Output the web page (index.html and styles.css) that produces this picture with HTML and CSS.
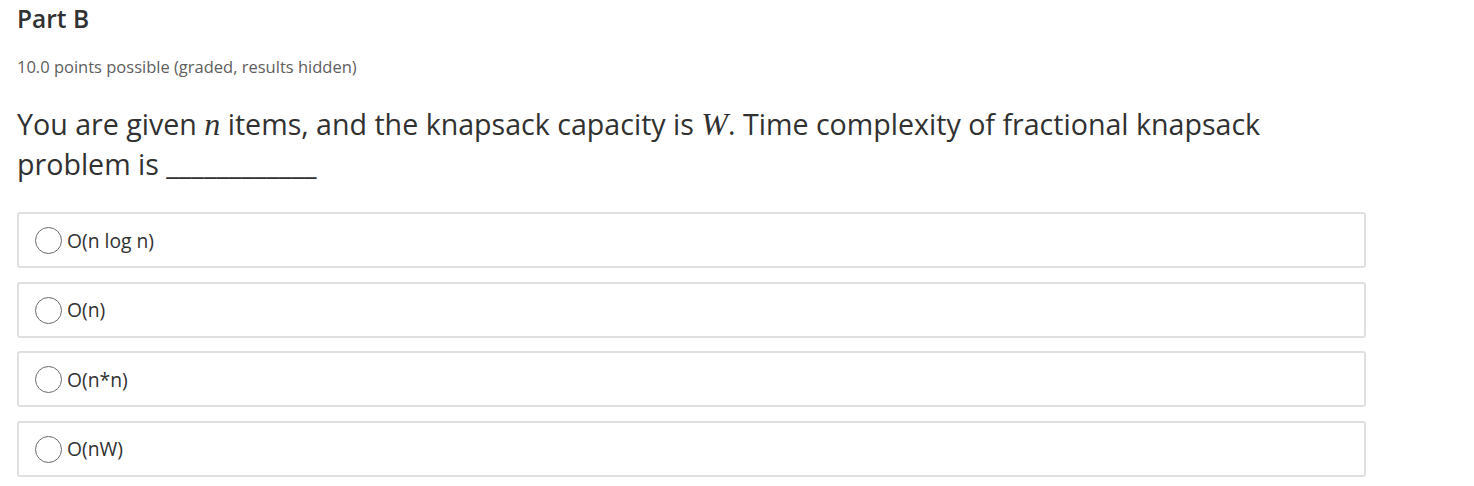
FILE: index.html
```html
<!DOCTYPE html>
<html lang="en">
<head>
  <meta charset="UTF-8" />
  <title>Part B</title>
  <link rel="stylesheet" href="styles.css">
</head>
<body>
  <div class="problem">
    <h3 class="problem-title">Part B</h3>
    <div class="problem-progress">10.0 points possible (graded, results hidden)</div>

    <p class="question">
      You are given <span class="math">n</span> items, and the knapsack capacity is <span class="math">W</span>. Time complexity of fractional knapsack problem is ____________
    </p>

    <div class="choices">
      <label class="choice"><input type="radio" name="partb"><span>O(n log n)</span></label>
      <label class="choice"><input type="radio" name="partb"><span>O(n)</span></label>
      <label class="choice"><input type="radio" name="partb"><span>O(n*n)</span></label>
      <label class="choice"><input type="radio" name="partb"><span>O(nW)</span></label>
    </div>
  </div>
</body>
</html>
```

FILE: styles.css
```css
body {
  margin: 0;
  font-family: "Open Sans", Arial, sans-serif;
  color: #313131;
  background: #fff;
}
.problem {
  padding: 3px 108px 0 17px;
}
.problem-title {
  margin: 0;
  font-size: 24.5px;
  font-weight: 600;
  line-height: 32px;
  color: #313131;
}
.problem-progress {
  margin-top: 22px;
  font-size: 16.5px;
  line-height: 20px;
  color: #5e5e5e;
}
.question {
  margin: 27px 0 0;
  font-size: 28.6px;
  line-height: 40px;
  color: #313131;
}
.math {
  font-family: "Liberation Serif", serif;
  font-style: italic;
  font-size: 32px;
}
.choices {
  margin-top: 28px;
  display: flex;
  flex-direction: column;
  gap: 13.5px;
}
.choice {
  display: flex;
  align-items: center;
  height: 52px;
  padding: 0 16px;
  border: 2px solid #e0e0e0;
  border-radius: 3px;
  font-size: 19.3px;
  color: #313131;
}
.choice input {
  appearance: none;
  flex: none;
  width: 27px;
  height: 27px;
  margin: 1px 5px 0 0;
  border: 1.5px solid #6b6b6b;
  border-radius: 50%;
  background: #fff;
}
```
